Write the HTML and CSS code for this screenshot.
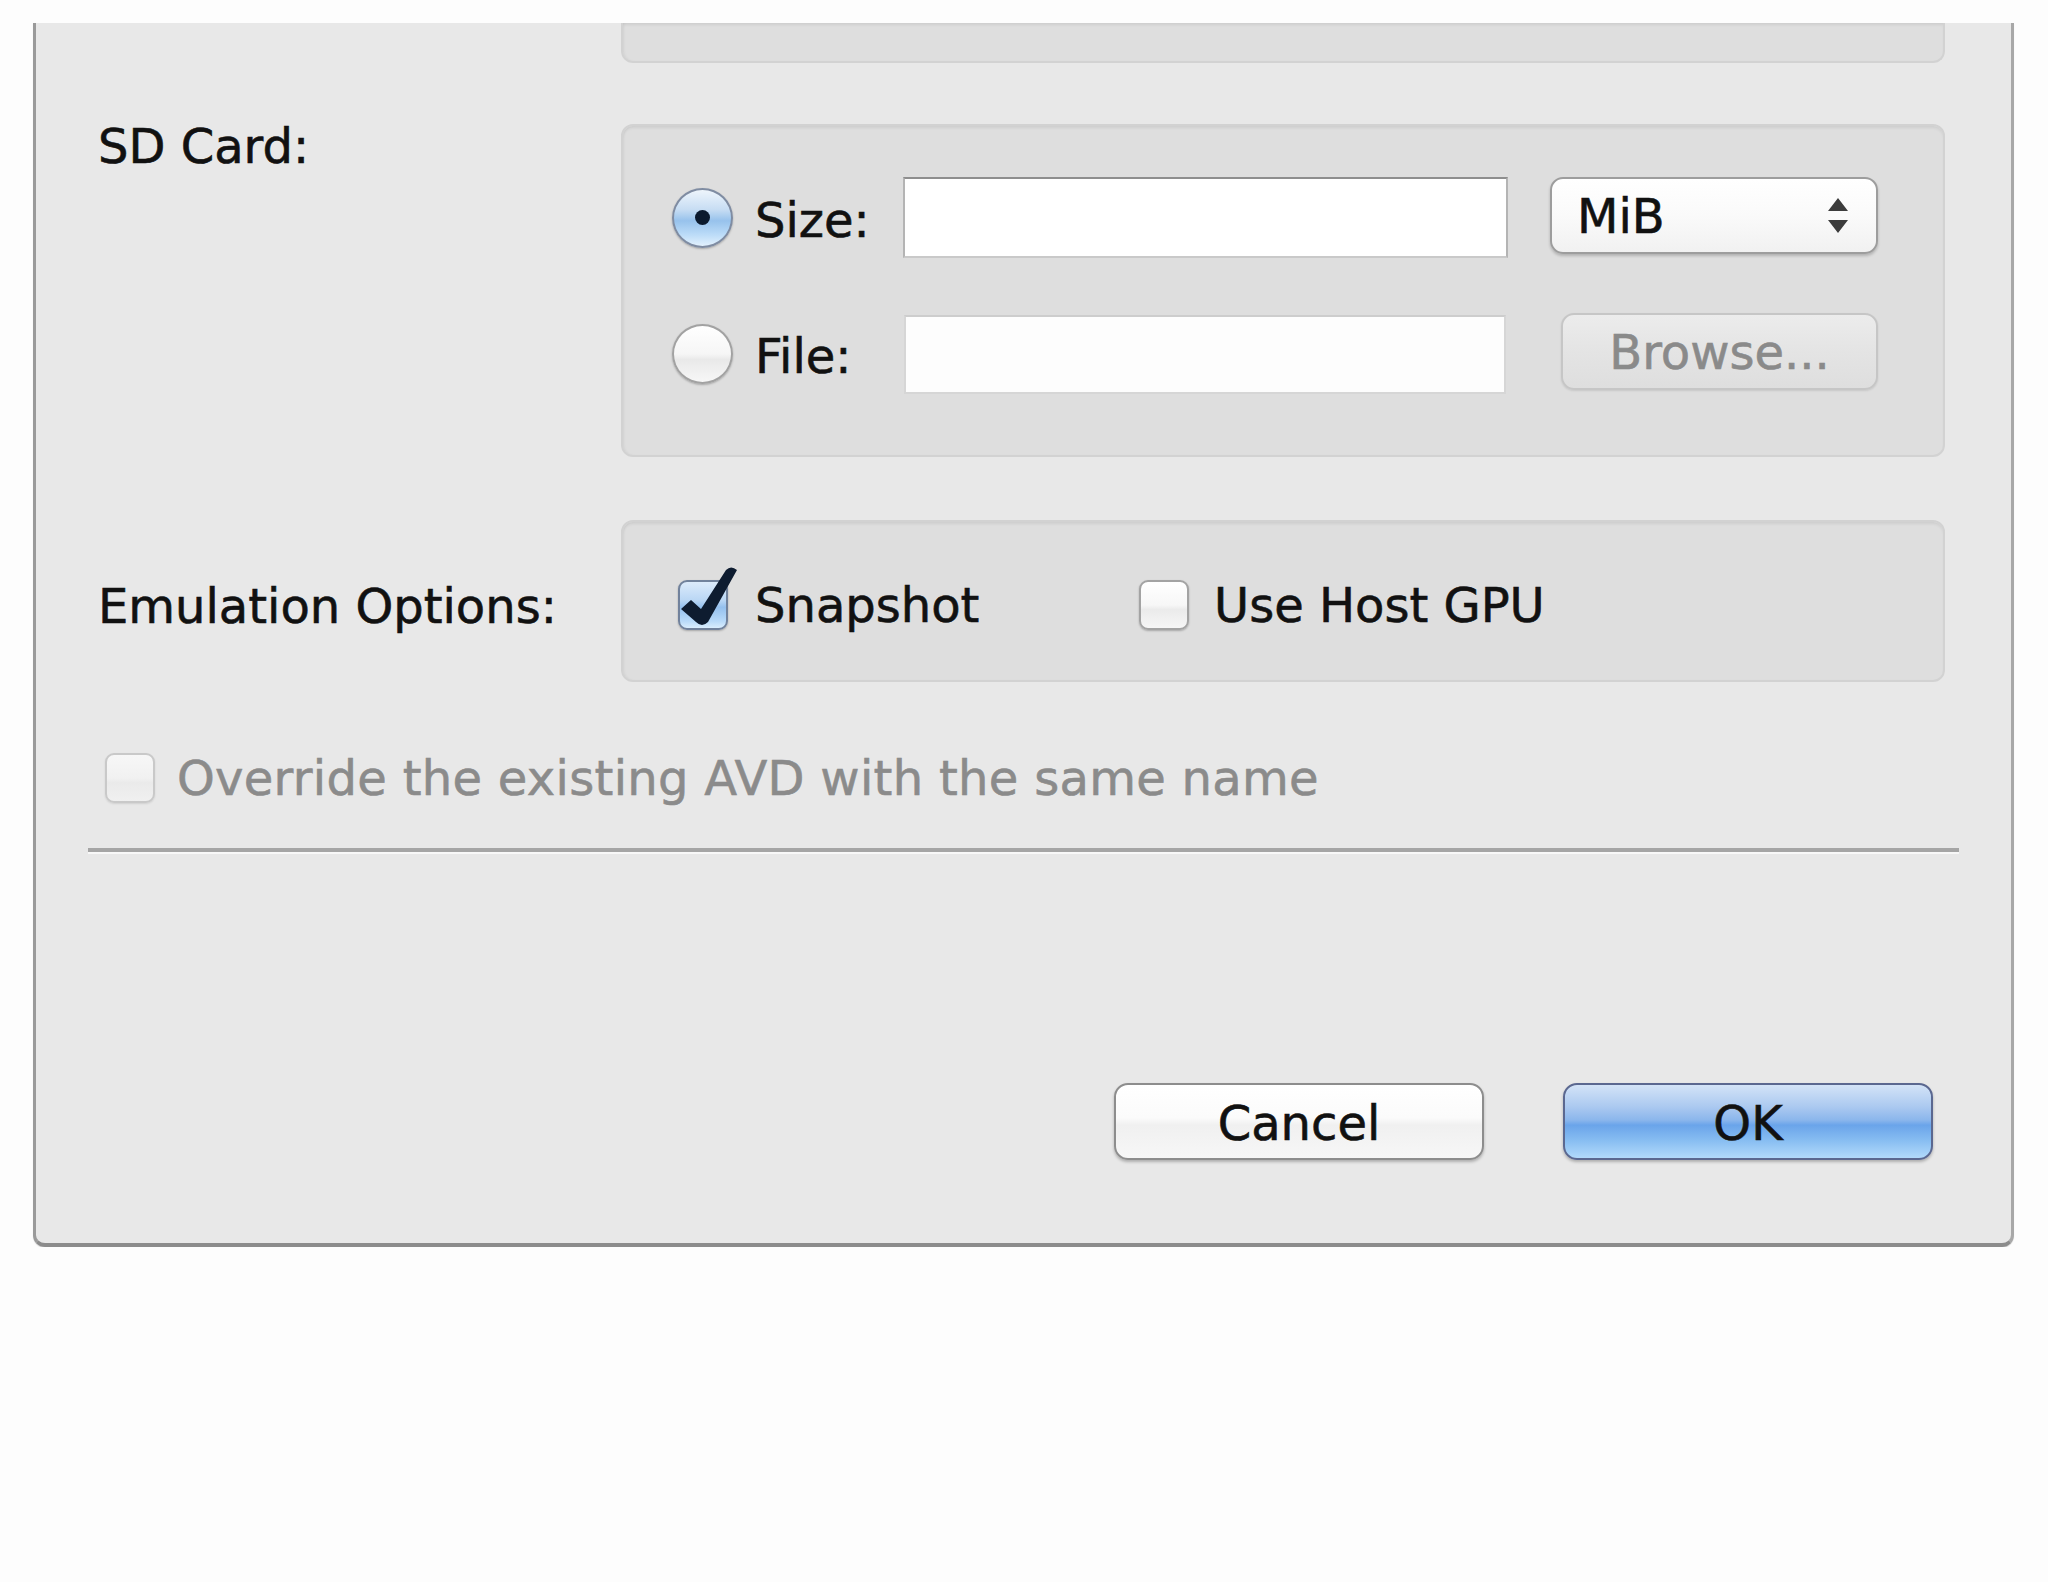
FILE: index.html
```html
<!DOCTYPE html>
<html>
<head>
<meta charset="utf-8">
<title>Create AVD</title>
<link rel="stylesheet" href="styles.css">
</head>
<body>
<div class="dialog">
  <div class="row">
    <div class="label-col"></div>
    <div class="group group-top"></div>
  </div>

  <div class="row row-sd">
    <div class="label-col label-sd">SD Card:</div>
    <div class="group group-sd">
      <div class="sd-line">
        <span class="radio radio-on"><span class="dot"></span></span>
        <span class="opt-label">Size:</span>
        <span class="field field-size"></span>
        <span class="popup">
          <span class="popup-text">MiB</span>
          <svg class="popup-arrows" width="20" height="36" viewBox="0 0 20 36"><path d="M10 0 L20 13 L0 13 Z M0 22 L20 22 L10 35 Z" fill="#3c3c3c"/></svg>
        </span>
      </div>
      <div class="sd-line sd-line2">
        <span class="radio radio-off"></span>
        <span class="opt-label">File:</span>
        <span class="field field-file"></span>
        <span class="btn-browse">Browse...</span>
      </div>
    </div>
  </div>

  <div class="row row-emu">
    <div class="label-col label-emu">Emulation Options:</div>
    <div class="group group-emu">
      <div class="check-item item-snapshot">
        <span class="checkbox checkbox-on">
          <svg class="tick" width="62" height="66" viewBox="0 -14 62 66"><path d="M3 29 L13 20 L23 29 L48 -10 Q53 -15 59 -10 L30 42 Q24 48 18 42 Z" fill="#0e1c30"/></svg>
        </span>
        <span class="check-text">Snapshot</span>
      </div>
      <div class="check-item item-gpu">
        <span class="checkbox checkbox-off"></span>
        <span class="check-text">Use Host GPU</span>
      </div>
    </div>
  </div>

  <div class="override">
    <span class="checkbox checkbox-disabled"></span>
    <span class="override-text">Override the existing AVD with the same name</span>
  </div>

  <div class="separator"></div>

  <div class="buttons">
    <span class="btn btn-cancel">Cancel</span>
    <span class="btn btn-ok">OK</span>
  </div>
</div>
</body>
</html>
```

FILE: styles.css
```css
html, body {
  margin: 0;
  padding: 0;
  background: #fdfdfd;
}

body {
  padding-top: 23px;
  font-family: "DejaVu Sans", "Liberation Sans", sans-serif;
  font-size: 48px;
  color: #111;
  -webkit-text-stroke: 0.6px currentColor;
}

.dialog {
  box-sizing: border-box;
  width: 1981px;
  margin-left: 33px;
  background: #e8e8e8;
  border-left: 3px solid #9a9a9a;
  border-right: 3px solid #a8a8a8;
  border-bottom: 4px solid #8c8c8c;
  border-radius: 0 0 12px 12px;
  padding: 0 66px 83px 62px;
  box-shadow: 0 1px 1px rgba(0,0,0,0.15);
}

.row {
  display: flex;
  align-items: flex-start;
}

.label-col {
  width: 523px;
  flex: none;
  line-height: 56px;
  white-space: nowrap;
}

.group {
  box-sizing: border-box;
  width: 1324px;
  flex: none;
  background: #dedede;
  border: 2px solid #d2d2d2;
  border-radius: 12px;
  box-shadow: inset 0 3px 3px -1px rgba(0,0,0,0.07), inset 2px 0 3px -1px rgba(0,0,0,0.05);
}

.group-top {
  height: 40px;
  border-top: none;
  border-radius: 0 0 12px 12px;
}

/* SD card */
.row-sd {
  margin-top: 61px;
}

.label-sd {
  margin-top: -6px;
}

.group-sd {
  height: 333px;
  padding: 51px 65px 61px 49px;
}

.sd-line {
  display: flex;
  align-items: center;
  height: 81px;
}

.sd-line2 {
  margin-top: 55px;
}

.radio {
  box-sizing: border-box;
  width: 61px;
  height: 60px;
  border-radius: 50%;
  flex: none;
  display: flex;
  align-items: center;
  justify-content: center;
  box-shadow: 0 1px 2px rgba(0,0,0,0.25);
}

.radio-on {
  border: 2px solid #7f8ca2;
  background: linear-gradient(#eef5fc 0%, #c7ddf3 35%, #97c2ec 55%, #bcdcf8 80%, #e3f1fd 100%);
}

.radio-off {
  border: 2px solid #a2a2a2;
  background: linear-gradient(#ffffff 0%, #f6f6f6 50%, #e9e9e9 60%, #f7f7f7 100%);
}

.dot {
  width: 15px;
  height: 15px;
  border-radius: 50%;
  background: #0b1a2e;
}

.opt-label {
  width: 148px;
  margin-left: 22px;
  flex: none;
  line-height: 56px;
  padding-top: 4px;
}

.field {
  box-sizing: border-box;
  width: 605px;
  flex: none;
  background: #fff;
}

.field-size {
  height: 81px;
  border: 2px solid #b4b4b4;
  border-top-color: #8e8e8e;
  border-bottom-color: #c9c9c9;
}

.field-file {
  height: 79px;
  align-self: flex-end;
  margin-left: 1px;
  width: 602px;
  border: 2px solid #d6d6d6;
  border-top-color: #cdcdcd;
  background: #fdfdfd;
}

.popup {
  box-sizing: border-box;
  width: 328px;
  height: 77px;
  margin-left: 42px;
  align-self: flex-start;
  display: flex;
  align-items: center;
  justify-content: space-between;
  padding: 0 28px 0 25px;
  border: 2px solid #9d9d9d;
  border-radius: 13px;
  background: linear-gradient(#ffffff 0%, #fafafa 50%, #f1f1f1 100%);
  box-shadow: 0 2px 3px rgba(0,0,0,0.2);
}

.popup-text {
  line-height: 56px;
}

.popup-arrows {
  display: block;
}

.btn-browse {
  box-sizing: border-box;
  width: 317px;
  height: 77px;
  margin-left: auto;
  align-self: flex-start;
  display: flex;
  align-items: center;
  justify-content: center;
  color: #8a8a8a;
  border: 2px solid #c6c6c6;
  border-radius: 13px;
  background: linear-gradient(#ececec 0%, #e4e4e4 50%, #dedede 100%);
  box-shadow: 0 1px 2px rgba(0,0,0,0.1);
  line-height: 56px;
}

/* Emulation options */
.row-emu {
  margin-top: 63px;
}

.label-emu {
  margin-top: 58px;
}

.group-emu {
  height: 162px;
  display: flex;
  align-items: center;
  padding: 10px 0 2px 55px;
}

.check-item {
  display: flex;
  align-items: center;
}

.item-snapshot {
  width: 461px;
}

.checkbox {
  position: relative;
  box-sizing: border-box;
  width: 50px;
  height: 50px;
  flex: none;
  border-radius: 9px;
  box-shadow: 0 1px 2px rgba(0,0,0,0.25);
}

.checkbox-on {
  border: 2px solid #71829c;
  background: linear-gradient(#dcebfb 0%, #b9d6f4 40%, #94c0ee 55%, #b8daf9 85%, #d9edfd 100%);
}

.checkbox-off {
  border: 2px solid #a3a3a3;
  background: linear-gradient(#ffffff 0%, #f7f7f7 50%, #ebebeb 60%, #f6f6f6 100%);
}

.checkbox-disabled {
  border: 2px solid #c9c9c9;
  background: linear-gradient(#f7f7f7 0%, #f1f1f1 50%, #eaeaea 60%, #f0f0f0 100%);
  box-shadow: 0 1px 2px rgba(0,0,0,0.1);
}

.tick {
  position: absolute;
  left: -2px;
  top: -16px;
}

.check-text {
  margin-left: 27px;
  line-height: 56px;
  white-space: nowrap;
}

.item-gpu .check-text {
  margin-left: 25px;
}

/* Override */
.override {
  display: flex;
  align-items: center;
  height: 56px;
  margin-top: 68px;
  padding-left: 7px;
}

.override-text {
  margin-left: 22px;
  color: #8b8b8b;
  line-height: 56px;
  white-space: nowrap;
  letter-spacing: 0.3px;
}

.separator {
  margin: 42px -14px 0 -10px;
  border-top: 4px solid #a5a5a5;
  border-bottom: 2px solid #f8f8f8;
}

/* Buttons */
.buttons {
  display: flex;
  justify-content: flex-end;
  margin-top: 229px;
  margin-right: 12px;
}

.btn {
  box-sizing: border-box;
  width: 370px;
  height: 77px;
  display: flex;
  align-items: center;
  justify-content: center;
  border-radius: 14px;
  line-height: 56px;
  padding-top: 2px;
  box-shadow: 0 2px 3px rgba(0,0,0,0.25);
}

.btn-cancel {
  border: 2px solid #8d8d8d;
  background: linear-gradient(#ffffff 0%, #fbfbfb 45%, #f0f0f0 55%, #f7f7f7 100%);
}

.btn-ok {
  margin-left: 79px;
  border: 2px solid #5b6890;
  background: linear-gradient(#d3e3f7 0%, #abc9f0 30%, #8bb6ec 48%, #6aa4ea 55%, #86bcf1 75%, #b2dafb 100%);
}
```
